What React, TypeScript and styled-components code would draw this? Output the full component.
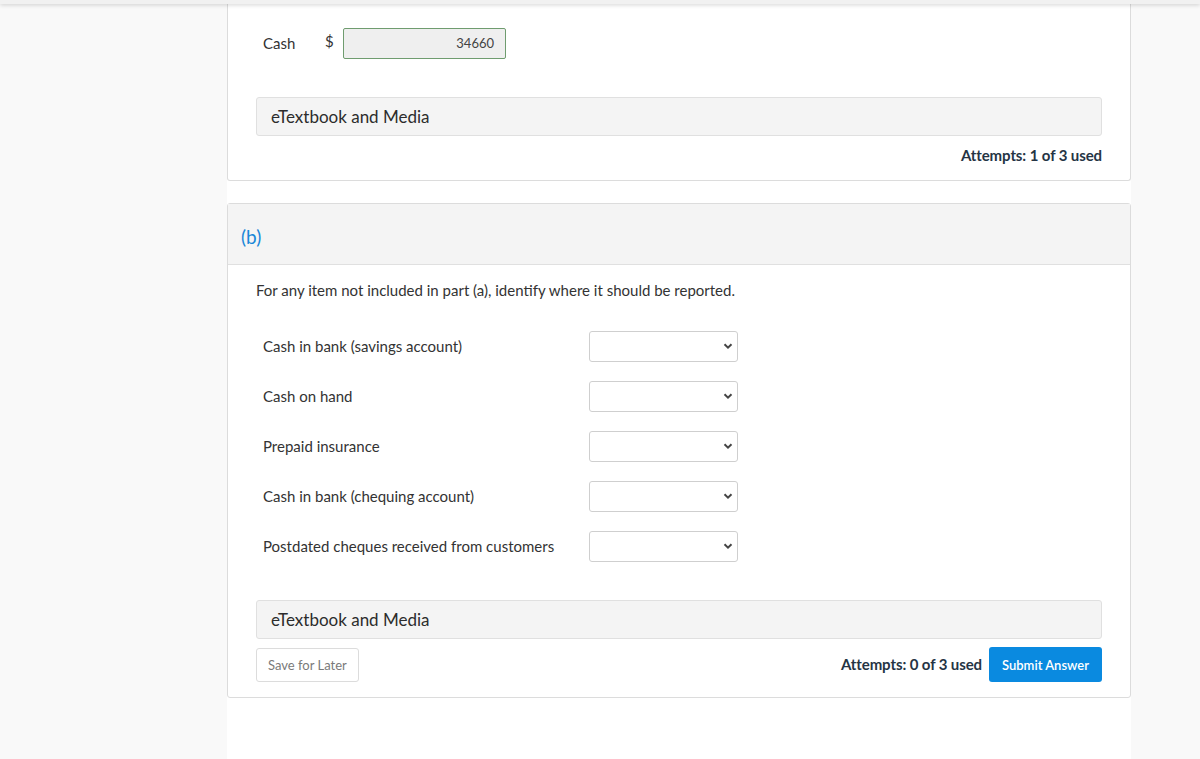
import React from "react";
import styled, { createGlobalStyle } from "styled-components";

const GlobalStyle = createGlobalStyle`
  html, body {
    margin: 0;
    padding: 0;
    background: #f9f9f9;
    font-family: Lato, "Open Sans", "Liberation Sans", sans-serif;
    color: #333;
  }
  * { box-sizing: border-box; }
`;

const TopBar = styled.div`
  height: 4px;
  background: #f1f1f1;
  box-shadow: 0 1px 4px rgba(0, 0, 0, 0.18);
  position: relative;
  z-index: 2;
`;

const Page = styled.div`
  min-height: 755px;
  display: flex;
  padding-left: 227px;
`;

const Column = styled.div`
  width: 904px;
  background: #fff;
  display: flex;
  flex-direction: column;
  gap: 22px;
  min-height: 755px;
`;

const Card = styled.div<{ $cut?: boolean }>`
  border: 1px solid #dcdcdc;
  border-top: ${(p) => (p.$cut ? "none" : "1px solid #dcdcdc")};
  border-radius: ${(p) => (p.$cut ? "0 0 3px 3px" : "3px")};
  background: #fff;
`;

const CardHeader = styled.div`
  height: 61px;
  background: #f4f4f4;
  border-bottom: 1px solid #e0e0e0;
  display: flex;
  align-items: center;
  padding: 4px 0 0 13px;
`;

const PartLabel = styled.span`
  color: #1a87d8;
  font-size: 19px;
`;

const CardBody = styled.div<{ $top: number; $bottom: number }>`
  padding: ${(p) => p.$top}px 28px ${(p) => p.$bottom}px 28px;
  display: flex;
  flex-direction: column;
`;

const Row = styled.div<{ $gap?: number }>`
  display: flex;
  align-items: center;
  padding-left: 7px;
  margin-top: ${(p) => p.$gap ?? 0}px;
  height: 30px;
`;

const CashLabel = styled.span`
  font-size: 15px;
  width: 62px;
`;

const Dollar = styled.span`
  font-size: 15px;
  width: 18px;
  margin-top: -4px;
`;

const AmountBox = styled.div`
  width: 163px;
  height: 31px;
  border: 1px solid #6f9c6f;
  border-radius: 2px;
  background: #efefef;
  font-size: 13px;
  color: #444;
  display: flex;
  align-items: center;
  justify-content: flex-end;
  padding-right: 11px;
`;

const MediaBar = styled.div<{ $gap: number }>`
  margin-top: ${(p) => p.$gap}px;
  height: 39px;
  background: #f4f4f4;
  border: 1px solid #e0e0e0;
  border-radius: 3px;
  display: flex;
  align-items: center;
  padding-left: 14px;
  font-size: 17px;
  color: #2c2c2c;
`;

const Attempts = styled.div`
  font-size: 15px;
  font-weight: 700;
  color: #253444;
  letter-spacing: -0.1px;
`;

const AttemptsRow = styled.div`
  display: flex;
  justify-content: flex-end;
  margin-top: 10px;
`;

const Prompt = styled.p`
  margin: 0;
  font-size: 15px;
  color: #333;
`;

const ItemLabel = styled.span`
  font-size: 15px;
  width: 326px;
  color: #333;
`;

const SelectBox = styled.div`
  width: 149px;
  height: 31px;
  border: 1px solid #cfcfcf;
  border-radius: 3px;
  background: #fff;
  display: flex;
  align-items: center;
  justify-content: flex-end;
  padding-right: 4px;
`;

const Footer = styled.div`
  display: flex;
  align-items: center;
  justify-content: space-between;
  margin-top: 7px;
`;

const SaveButton = styled.button`
  height: 34px;
  padding: 0 11px;
  border: 1px solid #dcdcdc;
  border-radius: 3px;
  background: #fff;
  color: #7a7a7a;
  font-family: inherit;
  font-size: 13px;
  margin-top: 2px;
`;

const RightGroup = styled.div`
  display: flex;
  align-items: center;
  gap: 7px;
`;

const SubmitButton = styled.button`
  height: 35px;
  padding: 0 13px;
  border: none;
  border-radius: 3px;
  background: #0a8ae0;
  color: #fff;
  font-family: inherit;
  font-size: 13px;
  font-weight: 600;
  margin-top: 1px;
`;

const Chevron = () => (
  <svg width="10" height="8" viewBox="0 0 10 8">
    <path d="M1.5 2.2 L5 5.6 L8.5 2.2" fill="none" stroke="#444" strokeWidth="2" />
  </svg>
);

const items = [
  "Cash in bank (savings account)",
  "Cash on hand",
  "Prepaid insurance",
  "Cash in bank (chequing account)",
  "Postdated cheques received from customers",
];

export default function App() {
  return (
    <>
      <GlobalStyle />
      <TopBar />
      <Page>
        <Column>
          <Card $cut>
            <CardBody $top={24} $bottom={16}>
              <Row>
                <CashLabel>Cash</CashLabel>
                <Dollar>$</Dollar>
                <AmountBox>34660</AmountBox>
              </Row>
              <MediaBar $gap={39}>eTextbook and Media</MediaBar>
              <AttemptsRow>
                <Attempts>Attempts: 1 of 3 used</Attempts>
              </AttemptsRow>
            </CardBody>
          </Card>
          <Card>
            <CardHeader>
              <PartLabel>(b)</PartLabel>
            </CardHeader>
            <CardBody $top={16} $bottom={15}>
              <Prompt>For any item not included in part (a), identify where it should be reported.</Prompt>
              {items.map((it, i) => (
                <Row key={it} $gap={i === 0 ? 32 : 20}>
                  <ItemLabel>{it}</ItemLabel>
                  <SelectBox>
                    <Chevron />
                  </SelectBox>
                </Row>
              ))}
              <MediaBar $gap={39}>eTextbook and Media</MediaBar>
              <Footer>
                <SaveButton>Save for Later</SaveButton>
                <RightGroup>
                  <Attempts>Attempts: 0 of 3 used</Attempts>
                  <SubmitButton>Submit Answer</SubmitButton>
                </RightGroup>
              </Footer>
            </CardBody>
          </Card>
        </Column>
      </Page>
    </>
  );
}
